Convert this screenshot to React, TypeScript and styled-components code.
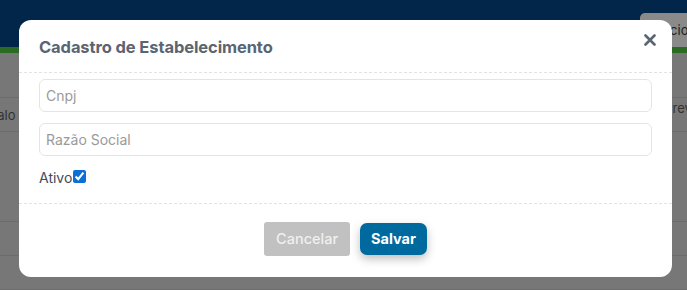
import React from 'react';
import styled, {createGlobalStyle} from "styled-components";

const GlobalStyle = createGlobalStyle`
  html, body {
    margin: 0;
    padding: 0;
    width: 687px;
    height: 290px;
    overflow: hidden;
    font-family: Inter, "Noto Sans", sans-serif;
  }
`

const rows = [
    {height: 44, left: "", right: ""},
    {height: 33, left: "Intervalo", right: "Previsão"},
    {height: 89, left: "", right: ""},
    {height: 33, left: "", right: ""},
    {height: 33, left: "", right: ""},
]

export const App = () => {
    return (
        <>
            <GlobalStyle/>
            <Page>
                <TopBar>
                    <TopButton>Adicionar</TopButton>
                </TopBar>
                <GreenLine/>
                <Table>
                    {rows.map((r, i) => (
                        <Row key={i} $h={r.height}>
                            <LeftCell>{r.left}</LeftCell>
                            <RightCell>{r.right}</RightCell>
                        </Row>
                    ))}
                </Table>
            </Page>

            <Modal>
                <ModalHeader>
                    <Title>Cadastro de Estabelecimento</Title>
                    <CloseButton aria-label="Fechar">
                        <svg width="12" height="12" viewBox="0 0 12 12">
                            <path d="M1.5 1.5 L10.5 10.5 M10.5 1.5 L1.5 10.5" stroke="#5b6472" strokeWidth="2.6"
                                  strokeLinecap="round"/>
                        </svg>
                    </CloseButton>
                </ModalHeader>
                <ModalBody>
                    <Input placeholder="Cnpj"/>
                    <Input placeholder="Razão Social"/>
                    <CheckLabel>
                        Ativo<Check type="checkbox" defaultChecked/>
                    </CheckLabel>
                </ModalBody>
                <ModalFooter>
                    <Button $variant="cancel">Cancelar</Button>
                    <Button $variant="save">Salvar</Button>
                </ModalFooter>
            </Modal>
        </>
    );
};

export default App;

const Page = styled.div`
  width: 687px;
  height: 290px;
  background: #777777;
  display: flex;
  flex-direction: column;
`

const TopBar = styled.div`
  height: 55px;
  background: #012649;
  display: flex;
  justify-content: flex-end;
  align-items: flex-start;
  padding-top: 13px;
  box-sizing: border-box;
`

const TopButton = styled.div`
  height: 34px;
  width: 90px;
  margin-right: -43px;
  background: #8a8a8a;
  border-radius: 5px;
  color: #1d1d1d;
  font-size: 13px;
  display: flex;
  align-items: center;
  padding-left: 10px;
  box-sizing: border-box;
`

const GreenLine = styled.div`
  height: 7px;
  background: #2b6a22;
`

const Table = styled.div`
  display: flex;
  flex-direction: column;
`

const Row = styled.div<{ $h: number }>`
  height: ${p => p.$h}px;
  border-bottom: 1px solid #6c6c6c;
  display: flex;
  justify-content: space-between;
  align-items: center;
  font-size: 13px;
  color: #333;
`

const LeftCell = styled.div`
  margin-left: -38px;
`

const RightCell = styled.div`
  margin-right: -30px;
  align-self: flex-start;
  padding-top: 2px;
`

const Modal = styled.div`
  position: absolute;
  top: 20px;
  left: 19px;
  width: 653px;
  height: 257px;
  background: #fff;
  border-radius: 12px;
  display: flex;
  flex-direction: column;
  overflow: hidden;
`

const ModalHeader = styled.div`
  height: 53px;
  border-bottom: 1px dashed #e3e3e3;
  display: flex;
  align-items: center;
  justify-content: space-between;
  padding: 0 16px 0 20px;
  box-sizing: border-box;
`

const Title = styled.h2`
  margin: 0;
  font-size: 16.5px;
  font-weight: 700;
  color: #5b6472;
  padding-top: 1px;
  letter-spacing: -0.1px;
`

const CloseButton = styled.button`
  border: none;
  background: none;
  padding: 0;
  display: flex;
  margin-top: -13px;
`

const ModalBody = styled.div`
  display: flex;
  flex-direction: column;
  gap: 11px;
  padding: 6px 20px 0 20px;
  height: 131px;
  box-sizing: border-box;
  border-bottom: 1px dashed #e3e3e3;
`

const Input = styled.input`
  height: 33px;
  border: 1px solid #e4e4e4;
  border-radius: 6px;
  padding: 0 6px;
  font-family: Inter, "Noto Sans", sans-serif;
  font-size: 14px;
  outline: none;
  box-sizing: border-box;

  &::placeholder {
    color: #9a9a9a;
  }
`

const CheckLabel = styled.label`
  display: flex;
  align-items: center;
  font-size: 14px;
  color: #444b55;
  margin-top: 2px;
`

const Check = styled.input`
  margin: 0 0 3px 1px;
  width: 13px;
  height: 13px;
  accent-color: #0b6fd8;
`

const ModalFooter = styled.div`
  flex: 1;
  display: flex;
  justify-content: center;
  align-items: center;
  gap: 10px;
  padding-bottom: 4px;
`

const Button = styled.button<{ $variant: "cancel" | "save" }>`
  font-family: Inter, "Noto Sans", sans-serif;
  font-size: 14.5px;
  border: none;
  border-radius: ${p => p.$variant === "save" ? "7px" : "3px"};
  height: ${p => p.$variant === "save" ? "32px" : "34px"};
  padding: 0 ${p => p.$variant === "save" ? "11px" : "12px"};
  background: ${p => p.$variant === "save" ? "#006a9f" : "#c1c1c1"};
  color: ${p => p.$variant === "save" ? "#fff" : "#f0f0f0"};
  font-weight: ${p => p.$variant === "save" ? 700 : 500};
  box-shadow: ${p => p.$variant === "save" ? "0 4px 10px rgba(0,0,0,0.25)" : "none"};
`
